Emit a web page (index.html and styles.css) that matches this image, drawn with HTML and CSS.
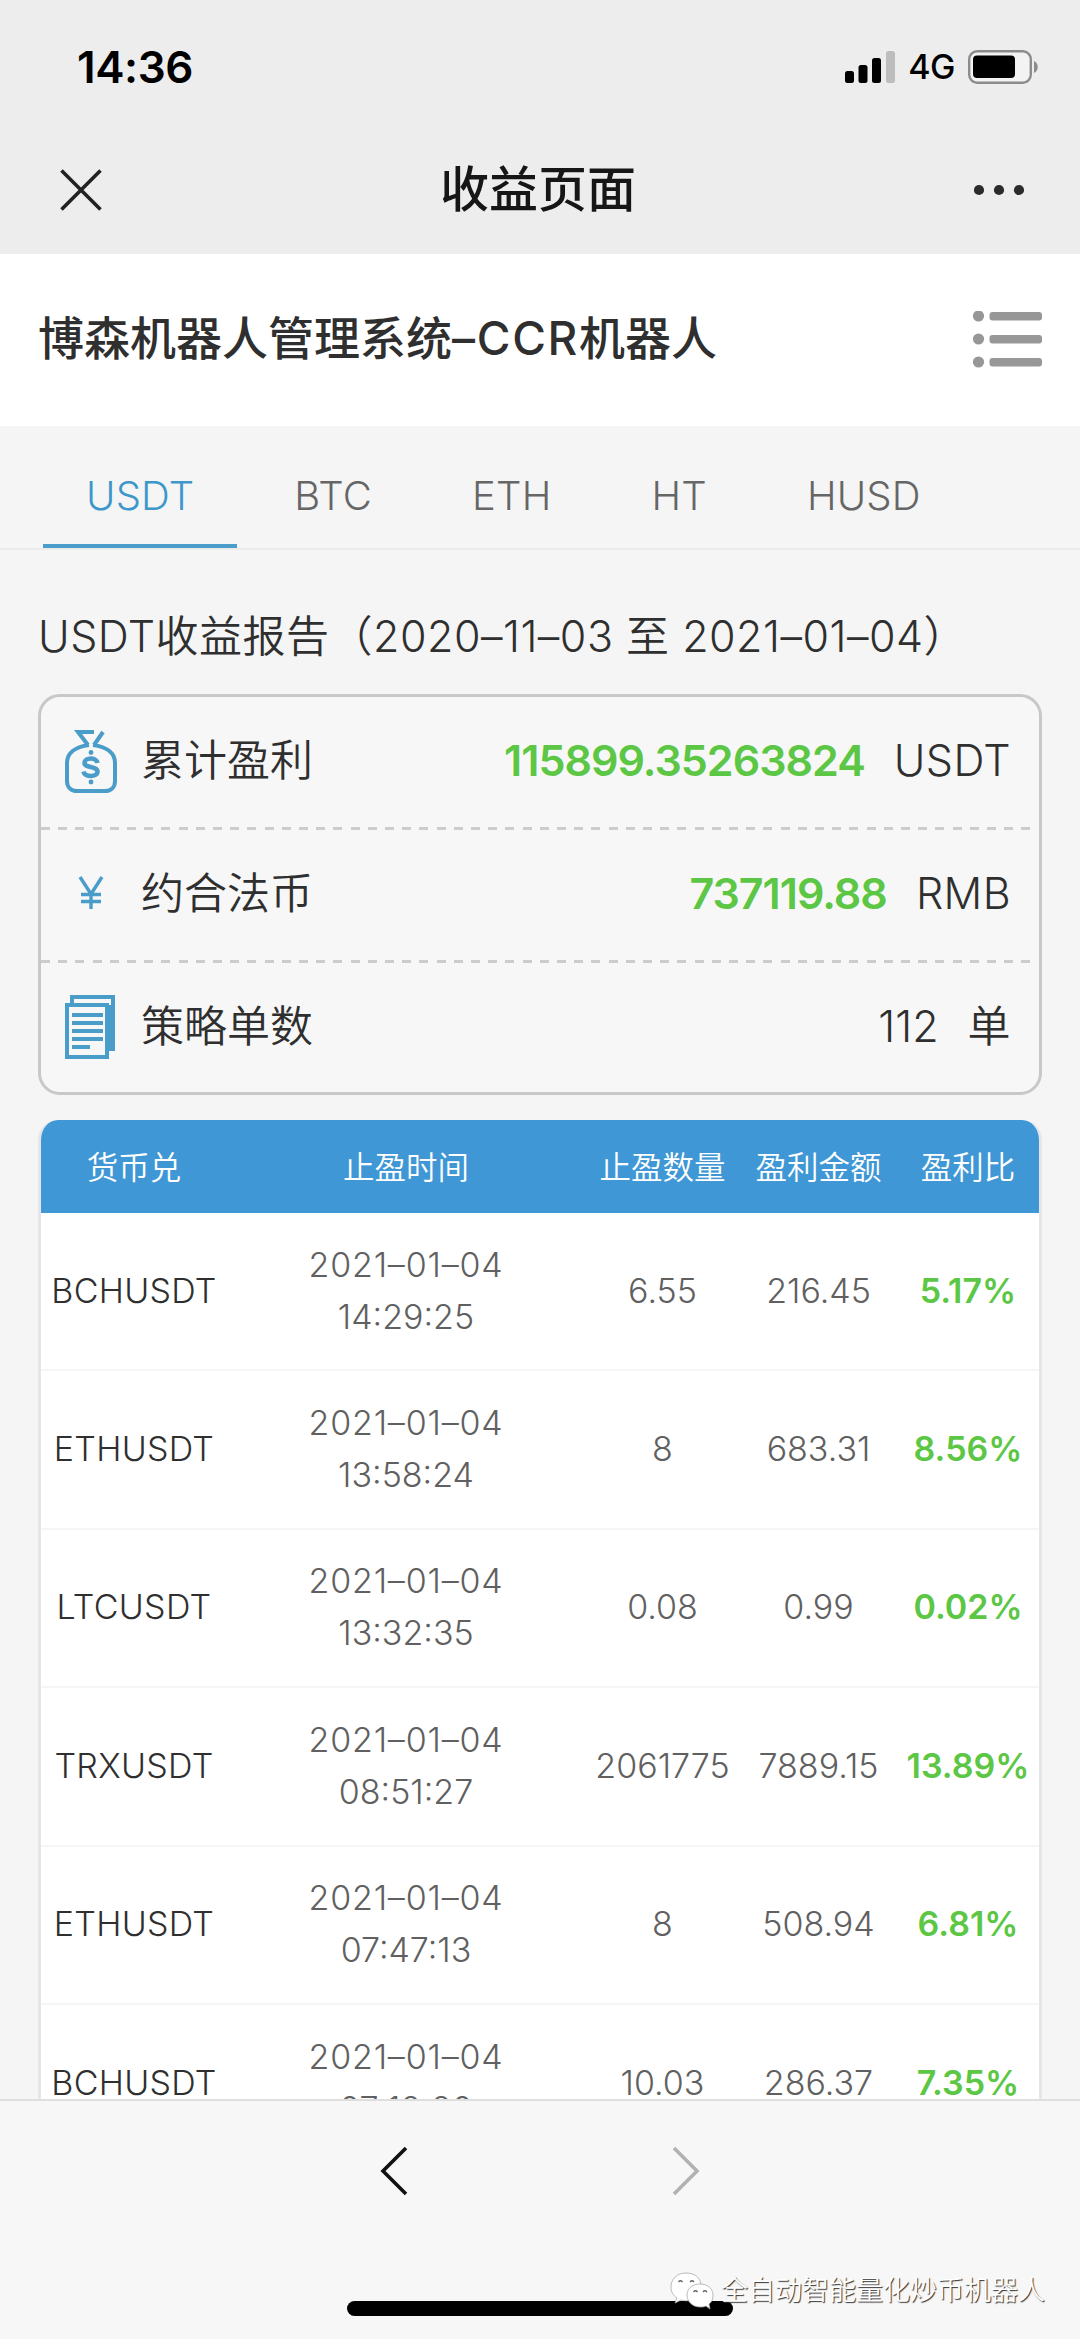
FILE: index.html
```html
<!DOCTYPE html>
<html lang="zh-CN">
<head>
  <meta charset="UTF-8" />
  <meta name="viewport" content="width=device-width, initial-scale=1.0"/>
  <title>收益页面</title>
  <link rel="stylesheet" href="styles.css">
</head>
<body>
  <div class="screen">
    <div class="status-bar">
      <span class="time">14:36</span>
      <div class="status-icons">
        <svg class="signal" viewBox="0 0 50 32" width="50" height="32">
          <rect x="0" y="20" width="9" height="12" rx="2.5"/>
          <rect x="13.5" y="14" width="9" height="18" rx="2.5"/>
          <rect x="27" y="7" width="9" height="25" rx="2.5"/>
          <rect x="41" y="0" width="9" height="32" rx="2.5" fill="#bdbdbd"/>
        </svg>
        <span class="network">4G</span>
        <svg class="battery" viewBox="0 0 71 34" width="71" height="34">
          <rect x="1.2" y="1.2" width="61.6" height="31.6" rx="8" fill="#f3f3f3" stroke="#8c8c8c" stroke-width="2.4"/>
          <rect x="5" y="5.5" width="42" height="22.5" rx="4"/>
          <path d="M66 11c5 2 5 10 0 12z" fill="#8c8c8c"/>
        </svg>
      </div>
    </div>

    <div class="nav-bar">
      <svg class="close" viewBox="0 0 42 42" width="42" height="42">
        <path d="M1.5 1.5l39 39M40.5 1.5l-39 39" stroke="#222" stroke-width="3.6"/>
      </svg>
      <h1>收益页面</h1>
      <svg class="more" viewBox="0 0 52 12" width="52" height="12" fill="#2b2b2b">
        <circle cx="5" cy="6" r="5.1"/>
        <circle cx="25" cy="6" r="5.1"/>
        <circle cx="45" cy="6" r="5.1"/>
      </svg>
    </div>

    <div class="page-head">
      <h2>博森机器人管理系统<span class="latin">–CCR</span>机器人</h2>
      <svg class="menu" viewBox="0 0 70 58" width="70" height="58" fill="#979797">
        <circle cx="6.5" cy="5" r="5.6"/>
        <circle cx="6.5" cy="28" r="5.6"/>
        <circle cx="6.5" cy="51" r="5.6"/>
        <rect x="17.5" y="1" width="52.5" height="8.5" rx="3"/>
        <rect x="17.5" y="24" width="52.5" height="8.5" rx="3"/>
        <rect x="17.5" y="47" width="52.5" height="8.5" rx="3"/>
      </svg>
    </div>

    <div class="tabs">
      <a class="tab active">USDT</a>
      <a class="tab">BTC</a>
      <a class="tab">ETH</a>
      <a class="tab">HT</a>
      <a class="tab">HUSD</a>
    </div>

    <div class="content">
      <h3 class="report-title">USDT收益报告（2020–11–03 至 2021–01–04）</h3>

      <div class="summary">
        <div class="summary-row">
          <svg class="icon" viewBox="0 0 54 64" width="54" height="64" fill="none" stroke="#4a9cc9" stroke-width="4">
            <path d="M30 3H14l10 13M39 3l-9 13M25 16C10 18 3 25 3 34v18c0 6 4 10 10 10h28c6 0 10-4 10-10V34c0-9-7-16-22-18"/>
            <circle cx="27" cy="23.5" r="1.2" stroke-width="2.5"/>
            <circle cx="27" cy="53" r="1.2" stroke-width="2.5"/>
            <path d="M33.5 34c-1-6-13-6-13 0 0 5 13 3 13 8.500 0 6-13 6-14 0" stroke-width="4.6"/>
          </svg>
          <span class="label">累计盈利</span>
          <span class="value green">115899.35263824</span>
          <span class="unit">USDT</span>
        </div>
        <div class="summary-row">
          <svg class="icon" viewBox="0 0 54 64" width="54" height="64" fill="none" stroke="#4a9cc9" stroke-width="3.4">
            <path d="M16 15l11 17 11-17M27 32v15M17 32.5h20M17 39.500h20"/>
          </svg>
          <span class="label">约合法币</span>
          <span class="value green">737119.88</span>
          <span class="unit">RMB</span>
        </div>
        <div class="summary-row">
          <svg class="icon" viewBox="0 0 54 64" width="54" height="64" fill="none" stroke="#4a9cc9" stroke-width="4">
            <path d="M8 8V2h41v52h-6" />
            <path d="M43 10h6v44h-6z" fill="#4a9cc9" stroke="none"/>
            <path d="M3 10h40v52H3zM8 20h31M8 28h31M8 36h31M8 44h31M8 52h18"/>
          </svg>
          <span class="label">策略单数</span>
          <span class="value">112</span>
          <span class="unit">单</span>
        </div>
      </div>

      <div class="orders">
        <div class="order-head">
          <span>货币兑</span>
          <span>止盈时间</span>
          <span>止盈数量</span>
          <span>盈利金额</span>
          <span>盈利比</span>
        </div>
        <div class="order">
          <span class="pair">BCHUSDT</span>
          <span><span class="date">2021–01–04</span><br>14:29:25</span>
          <span>6.55</span>
          <span>216.45</span>
          <span class="rate">5.17%</span>
        </div>
        <div class="order">
          <span class="pair">ETHUSDT</span>
          <span><span class="date">2021–01–04</span><br>13:58:24</span>
          <span>8</span>
          <span>683.31</span>
          <span class="rate">8.56%</span>
        </div>
        <div class="order">
          <span class="pair">LTCUSDT</span>
          <span><span class="date">2021–01–04</span><br>13:32:35</span>
          <span>0.08</span>
          <span>0.99</span>
          <span class="rate">0.02%</span>
        </div>
        <div class="order">
          <span class="pair">TRXUSDT</span>
          <span><span class="date">2021–01–04</span><br>08:51:27</span>
          <span>2061775</span>
          <span>7889.15</span>
          <span class="rate">13.89%</span>
        </div>
        <div class="order">
          <span class="pair">ETHUSDT</span>
          <span><span class="date">2021–01–04</span><br>07:47:13</span>
          <span>8</span>
          <span>508.94</span>
          <span class="rate">6.81%</span>
        </div>
        <div class="order">
          <span class="pair">BCHUSDT</span>
          <span><span class="date">2021–01–04</span><br>07:12:20</span>
          <span>10.03</span>
          <span>286.37</span>
          <span class="rate">7.35%</span>
        </div>
      </div>
    </div>

    <div class="toolbar">
      <div class="arrows">
        <svg viewBox="0 0 28 50" width="28" height="50" fill="none" stroke="#111" stroke-width="3.6">
          <path d="M26 2L3 25l23 23"/>
        </svg>
        <svg viewBox="0 0 28 50" width="28" height="50" fill="none" stroke="#b2b2b2" stroke-width="3.6">
          <path d="M2 2l23 23L2 48"/>
        </svg>
      </div>
      <div class="home-indicator"></div>
      <div class="watermark">
        <svg viewBox="0 0 44 38" width="44" height="38" fill="#fff" stroke="#aaa" stroke-width="0.8">
          <path d="M16 1C7 1 1 7 1 15c0 5 2 8 6 11l-2 5 6-3c3 1 7 1 10 0l10-14C31 6 25 1 16 1z"/>
          <path d="M30 12c-8 0-13 5-13 11s5 12 13 12c2 0 4 0 6-1l4 3-1-5c3-2 4-5 4-9 0-6-5-11-13-11z"/>
          <path d="M8.5 10q2-2.5 4 0M20 10q2-2.5 4 0M23.5 20q2-2.5 4 0M33 20q2-2.5 4 0" fill="none" stroke="#666" stroke-width="1.3"/>
        </svg>
        <span>全自动智能量化炒币机器人</span>
      </div>
    </div>
  </div>
</body>
</html>
```
FILE: styles.css
```css
* {
  box-sizing: border-box;
}

body {
  margin: 0;
  background: #f5f5f5;
  font-family: Inter, "Noto Sans CJK SC", sans-serif;
  font-weight: 350;
  color: #2f2f2f;
}

h1, h2, h3 {
  margin: 0;
}

svg {
  display: block;
  flex: none;
}

.screen {
  width: 1080px;
  height: 2339px;
  display: flex;
  flex-direction: column;
  overflow: hidden;
}

.status-bar {
  height: 134px;
  flex: none;
  padding: 0 41px 0 77px;
  display: flex;
  align-items: center;
  justify-content: space-between;
  background: #ededed;
}

.time {
  font-size: 44px;
  font-weight: 600;
  letter-spacing: -0.4px;
  color: #000;
}

.status-icons {
  display: flex;
  align-items: center;
  gap: 13px;
}

.network {
  font-size: 34px;
  font-weight: 450;
  line-height: 34px;
  letter-spacing: -0.5px;
  color: #000;
}

.nav-bar {
  height: 120px;
  flex: none;
  padding: 0 54px 8px 60px;
  display: flex;
  align-items: center;
  justify-content: space-between;
  background: #ededed;
}

.nav-bar h1 {
  font-size: 49px;
  font-weight: 500;
  line-height: 60px;
  color: #161616;
}

.page-head {
  height: 172px;
  flex: none;
  padding: 0 38px;
  display: flex;
  align-items: center;
  justify-content: space-between;
  background: #fff;
}

.page-head h2 {
  padding-bottom: 4px;
  font-size: 46px;
  font-weight: 500;
  line-height: 60px;
}

.latin {
  letter-spacing: 1.7px;
}

.tabs {
  height: 124px;
  flex: none;
  padding-left: 43px;
  display: flex;
  gap: 14px;
  border-bottom: 2px solid #ebebeb;
}

.tab {
  padding: 0 43px;
  height: 122px;
  line-height: 139px;
  font-size: 40px;
  letter-spacing: 0.2px;
  color: #666;
}

.tab.active {
  color: #3e97cb;
  border-bottom: 4px solid #4a9cc9;
}

.content {
  flex: 1;
  min-height: 0;
  padding: 56px 38px 0;
  overflow: hidden;
}

.report-title {
  font-size: 43px;
  font-weight: 350;
  line-height: 60px;
  letter-spacing: 0.5px;
  white-space: nowrap;
}

.summary {
  height: 401px;
  margin-top: 28px;
  border: 3px solid #c8c8c8;
  border-radius: 22px;
  background: #f7f7f7;
}

.summary-row {
  height: 133px;
  padding: 0 28px 5px 23px;
  display: flex;
  align-items: center;
  font-size: 43px;
  line-height: 60px;
  background: repeating-linear-gradient(90deg, #ccc 0 9px, transparent 9px 17.2px) bottom / 100% 3px no-repeat;
}

.summary-row:last-child {
  background: none;
}

.label {
  margin-left: 23px;
  padding-bottom: 2px;
}

.value,
.unit {
  padding-bottom: 2px;
}

.value {
  margin-left: auto;
  margin-right: 29px;
}

.unit {
  letter-spacing: 0.4px;
}

.green {
  font-weight: 600;
  letter-spacing: -1px;
  color: #5cc645;
}

.orders {
  margin: 25px 0 0;
  border: 3px solid #e6e6ea;
  border-top: none;
  border-radius: 20px 20px 0 0;
  background: #fff;
  overflow: hidden;
}

.order-head,
.order {
  display: grid;
  grid-template-columns: 186px 358px 155px 157px 142px;
  align-items: center;
  text-align: center;
}

.order-head {
  height: 93px;
  padding-bottom: 3px;
  font-size: 31.5px;
  color: #fff;
  background: #3f98d5;
}

.order {
  height: 158.4px;
  padding-bottom: 1px;
  border-bottom: 2px solid #f5f5f5;
  font-size: 34px;
  line-height: 52px;
  color: #606060;
}

.pair {
  letter-spacing: 0.3px;
  color: #2f2f2f;
}

.date {
  letter-spacing: 0.8px;
}

.rate {
  font-weight: 600;
  color: #5cc645;
}

.toolbar {
  position: relative;
  height: 240px;
  flex: none;
  padding-top: 45px;
  border-top: 2px solid #dedede;
  background: #f7f7f7;
}

.arrows {
  display: flex;
  justify-content: space-between;
  width: 320px;
  margin: 0 auto;
}

.home-indicator {
  width: 386px;
  height: 15px;
  margin: 105px auto 0;
  border-radius: 8px;
  background: #000;
}

/* account mark laid over the toolbar */
.watermark {
  position: absolute;
  right: 35px;
  bottom: 28px;
  display: flex;
  align-items: center;
  gap: 7px;
  font-size: 27px;
  line-height: 40px;
  color: #fff;
  text-shadow: 1px 1px 1px #333;
}
```
